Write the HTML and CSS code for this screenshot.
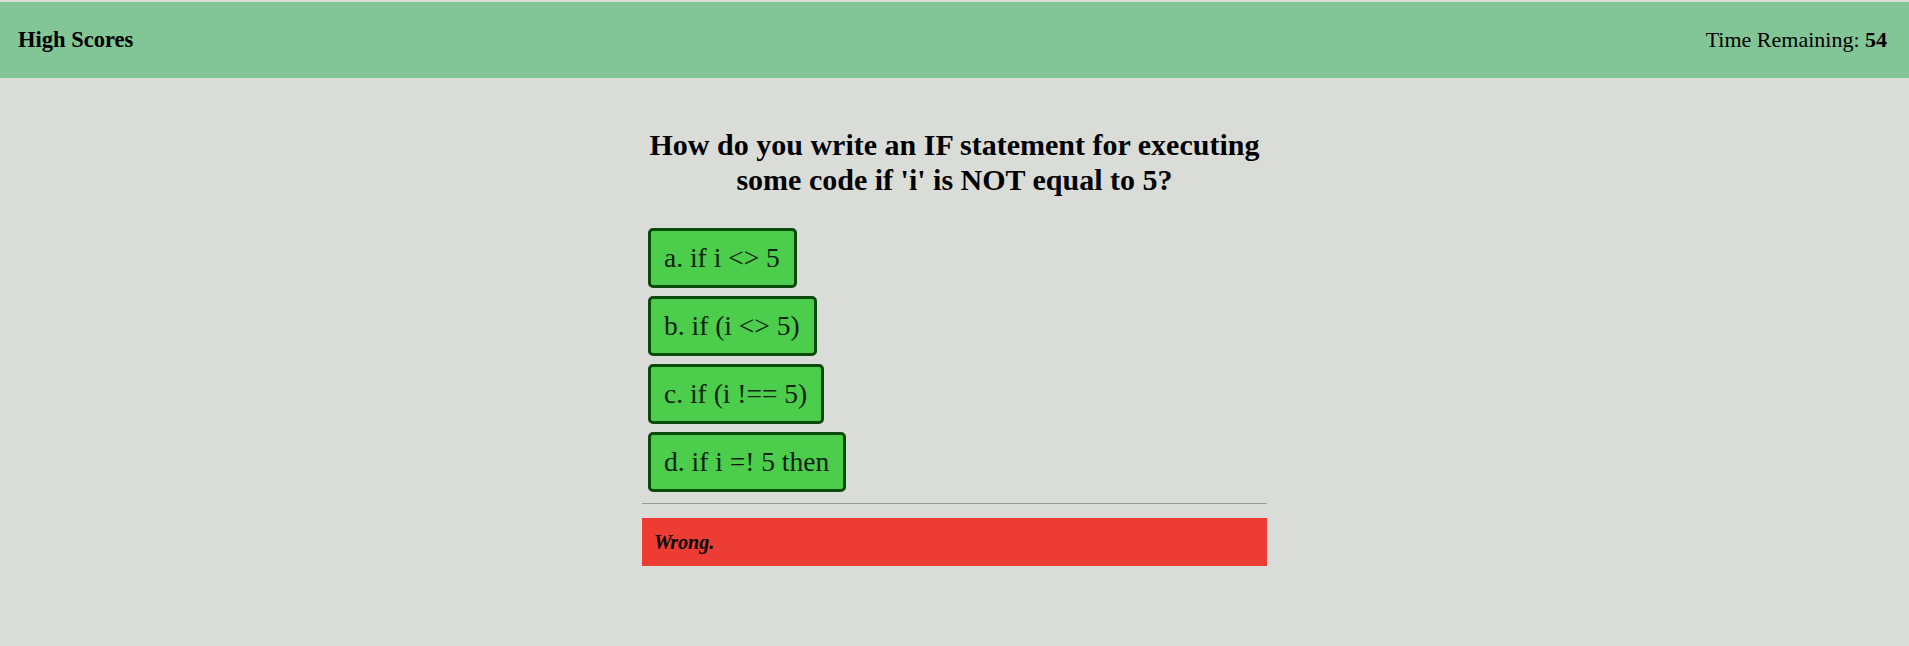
FILE: index.html
```html
<!DOCTYPE html>
<html lang="en">
<head>
<meta charset="utf-8">
<title>Code Quiz</title>
<link rel="stylesheet" href="styles.css">
</head>
<body>
<header class="topbar">
  <a class="scores-link">High Scores</a>
  <div class="timer">Time Remaining: <strong>54</strong></div>
</header>
<main class="quiz">
  <h1 class="question">How do you write an IF statement for executing some code if 'i' is NOT equal to 5?</h1>
  <div class="choices">
    <button class="choice">a. if i &lt;&gt; 5</button>
    <button class="choice">b. if (i &lt;&gt; 5)</button>
    <button class="choice">c. if (i !== 5)</button>
    <button class="choice">d. if i =! 5 then</button>
  </div>
  <hr class="divider">
  <div class="feedback"><em>Wrong.</em></div>
</main>
</body>
</html>
```

FILE: styles.css
```css
html, body {
  margin: 0;
  padding: 0;
}

body {
  background: #dadcd7;
  font-family: "Liberation Serif", "Times New Roman", serif;
  color: #000;
  padding-top: 2px;
}

.topbar {
  height: 76px;
  background: #82c596;
  display: flex;
  align-items: center;
  justify-content: space-between;
  padding: 0 22px 0 18px;
  font-size: 22px;
}

.scores-link {
  font-weight: bold;
  font-size: 22.5px;
}

.timer strong {
  font-weight: bold;
}

.quiz {
  width: 625px;
  margin: 0 auto;
}

.question {
  font-size: 30px;
  font-weight: bold;
  text-align: center;
  line-height: 35px;
  margin: 49px 0 31px;
  padding: 0;
}

.choices {
  display: flex;
  flex-direction: column;
  align-items: flex-start;
  gap: 8px;
  padding-left: 6px;
}

.choice {
  font-family: "Liberation Serif", "Times New Roman", serif;
  font-size: 27.5px;
  line-height: 28px;
  color: #0b1f0b;
  background: #4ccd4c;
  border: 3px solid #0a4a0a;
  border-radius: 5px;
  padding: 13px 14px 13px 13px;
  cursor: pointer;
}

.divider {
  border: 0;
  border-top: 1px solid #9a9a9a;
  margin: 11px 0 14px;
}

.feedback {
  background: #ec3c34;
  height: 48px;
  display: flex;
  align-items: center;
  padding-left: 12px;
  font-size: 20px;
  font-weight: bold;
}
```
